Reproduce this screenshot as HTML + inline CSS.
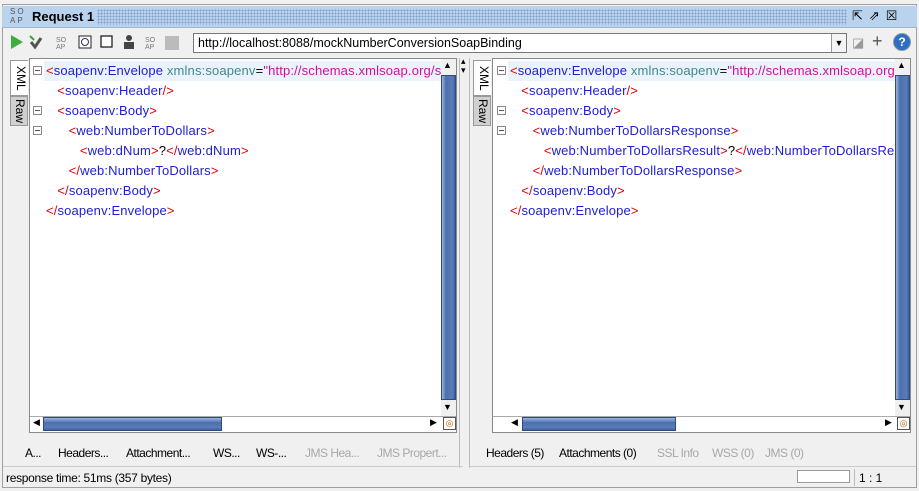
<!DOCTYPE html>
<html><head><style>
*{margin:0;padding:0;box-sizing:border-box}
body{width:919px;height:491px;background:#f0f0f0;font-family:"Liberation Sans",sans-serif;font-size:12px;position:relative;overflow:hidden;color:#000}
.a{position:absolute}
.title{left:2px;top:6px;width:915px;height:22px;background:#b9d3ef;border-bottom:1px solid #9bb7d6}
.dots{left:95px;top:3px;width:750px;height:16px;background-image:radial-gradient(#7f9fc7 0.8px,transparent 1px);background-size:3px 3px}
.ed{background:#fff;border:1px solid #8a8a8a}
.code{font-size:13px;line-height:20px;white-space:pre;font-family:"Liberation Sans",sans-serif;letter-spacing:0.15px}
.r{color:#e00000}.b{color:#2020d0}.t{color:#3f8a8a}.m{color:#d0109d}
.vs{background:linear-gradient(90deg,#9ab4dc,#4c6fae 30%,#5a7dba 80%,#3d5e99);border:1px solid #2e4c80}
.hs{background:linear-gradient(#9ab4dc,#4c6fae 40%,#5a7dba 80%,#3d5e99);border:1px solid #2e4c80}
.fold{width:9px;height:9px;border:1px solid #888;background:#fff}
.fold:after{content:"";position:absolute;left:1px;top:3px;width:5px;height:1px;background:#555}
.tab{background:#e8e8e8;border:1px solid #999;font-size:12px;writing-mode:vertical-rl;text-align:center}
.bt{font-size:12px;letter-spacing:-0.5px;top:446px}
.g{color:#a8a8a8}
</style></head><body>
<div class="a" style="left:2px;top:4px;width:915px;height:484px;border:1px solid #a0a0a0;background:#f0f0f0"></div>
<div class="a title">
 <div class="a" style="left:8px;top:1px;font-size:8px;line-height:9px;color:#555;letter-spacing:2px">SO<br>AP</div>
 <div class="a" style="left:30px;top:3px;font-weight:bold;font-size:13px">Request 1</div>
 <div class="a dots"></div>
 <div class="a" style="left:850px;top:2px;font-size:13px;letter-spacing:6px">⇱⇗☒</div>
</div>
<svg class="a" style="left:10px;top:34px" width="180" height="18">
<polygon points="1,1 13,8 1,15" fill="#3cae3c"/>
<path d="M21 8l4 5 6-9" stroke="#555" stroke-width="3" fill="none"/><path d="M20 2l4 4" stroke="#3a3" stroke-width="2"/>
<text x="46" y="8" font-size="7" fill="#777">SO</text><text x="46" y="15" font-size="7" fill="#777">AP</text>
<rect x="69" y="2" width="12" height="12" fill="#fff" stroke="#222"/><circle cx="75" cy="8" r="3.5" fill="none" stroke="#336"/>
<rect x="91" y="2" width="11" height="11" fill="#fff" stroke="#222" stroke-width="1.3"/>
<circle cx="119" cy="4" r="3" fill="#444"/><rect x="114" y="8" width="10" height="7" fill="#444"/>
<text x="135" y="8" font-size="7" fill="#777">SO</text><text x="135" y="15" font-size="7" fill="#777">AP</text>
<rect x="155" y="2" width="14" height="14" fill="#bbb"/>
</svg>
<div class="a" style="left:193px;top:33px;width:654px;height:20px;background:#fff;border:1px solid #777;font-size:12.5px;padding:2px 4px">http://localhost:8088/mockNumberConversionSoapBinding</div>
<div class="a" style="left:831px;top:34px;width:15px;height:18px;border-left:1px solid #999;background:#f4f4f4;font-size:9px;text-align:center;line-height:18px">▼</div>
<div class="a" style="left:852px;top:35px;color:#999;font-size:13px">◪</div>
<div class="a" style="left:872px;top:31px;font-size:18px;color:#555">+</div>
<div class="a" style="left:893px;top:33px;width:18px;height:18px;border-radius:50%;background:#2f6fc2;border:1px solid #89a;color:#fff;font-weight:bold;text-align:center;line-height:17px">?</div>
<div class="a" style="left:459px;top:58px;width:1px;height:410px;background:#bbb"></div>
<div class="a" style="left:469px;top:58px;width:1px;height:410px;background:#bbb"></div>
<div class="a" style="left:461px;top:57px;font-size:9px;line-height:9px">▴<br>▾</div>
<div class="a tab" style="left:10px;top:60px;width:18px;height:36px;background:#fff;border-right:none">XML</div>
<div class="a tab" style="left:10px;top:96px;width:18px;height:30px;background:#d0d0d0">Raw</div>
<div class="a ed" style="left:29px;top:58px;width:428px;height:375px"></div>
<div class="a" style="left:44px;top:61px;width:397px;height:20px;background:#eaf2fc"></div>
<div class="a fold" style="left:33px;top:66px"></div><div class="a fold" style="left:33px;top:106px"></div><div class="a fold" style="left:33px;top:126px"></div>
<div class="a code" style="left:46px;top:61px;width:395px;overflow:hidden"><span class="r">&lt;</span><span class="b">soapenv:Envelope</span> <span class="t">xmlns:soapenv</span>=<span class="m">"http://schemas.xmlsoap.org/soap/envelope/"</span>
   <span class="r">&lt;</span><span class="b">soapenv:Header</span><span class="r">/&gt;</span>
   <span class="r">&lt;</span><span class="b">soapenv:Body</span><span class="r">&gt;</span>
      <span class="r">&lt;</span><span class="b">web:NumberToDollars</span><span class="r">&gt;</span>
         <span class="r">&lt;</span><span class="b">web:dNum</span><span class="r">&gt;</span>?<span class="r">&lt;/</span><span class="b">web:dNum</span><span class="r">&gt;</span>
      <span class="r">&lt;/</span><span class="b">web:NumberToDollars</span><span class="r">&gt;</span>
   <span class="r">&lt;/</span><span class="b">soapenv:Body</span><span class="r">&gt;</span>
<span class="r">&lt;/</span><span class="b">soapenv:Envelope</span><span class="r">&gt;</span></div>
<div class="a" style="left:441px;top:59px;width:15px;height:357px;background:#f0f0f0"></div>
<div class="a" style="left:443px;top:60px;font-size:9px">▲</div>
<div class="a vs" style="left:441px;top:75px;width:15px;height:325px"></div>
<div class="a" style="left:443px;top:402px;font-size:9px">▼</div>
<div class="a" style="left:30px;top:416px;width:426px;height:16px;background:#fff;border-top:1px solid #aaa"></div>
<div class="a" style="left:33px;top:417px;font-size:9px">◀</div>
<div class="a hs" style="left:43px;top:417px;width:179px;height:14px"></div>
<div class="a" style="left:430px;top:417px;font-size:9px">▶</div>
<div class="a" style="left:443px;top:417px;width:13px;height:13px;border:1px solid #555;font-size:9px;line-height:11px;text-align:center;color:#a60">◎</div>
<div class="a bt" style="left:25px">A...</div>
<div class="a bt" style="left:58px">Headers...</div>
<div class="a bt" style="left:126px">Attachment...</div>
<div class="a bt" style="left:213px">WS...</div>
<div class="a bt" style="left:256px">WS-...</div>
<div class="a bt g" style="left:305px">JMS Hea...</div>
<div class="a bt g" style="left:377px">JMS Propert...</div>
<div class="a tab" style="left:473px;top:60px;width:18px;height:36px;background:#fff;border-right:none">XML</div>
<div class="a tab" style="left:473px;top:96px;width:18px;height:30px;background:#d0d0d0">Raw</div>
<div class="a ed" style="left:492px;top:58px;width:419px;height:375px"></div>
<div class="a" style="left:508px;top:61px;width:387px;height:20px;background:#eaf2fc"></div>
<div class="a fold" style="left:497px;top:66px"></div><div class="a fold" style="left:497px;top:106px"></div><div class="a fold" style="left:497px;top:126px"></div>
<div class="a code" style="left:510px;top:61px;width:385px;overflow:hidden"><span class="r">&lt;</span><span class="b">soapenv:Envelope</span> <span class="t">xmlns:soapenv</span>=<span class="m">"http://schemas.xmlsoap.org/soap/envelope/"</span>
   <span class="r">&lt;</span><span class="b">soapenv:Header</span><span class="r">/&gt;</span>
   <span class="r">&lt;</span><span class="b">soapenv:Body</span><span class="r">&gt;</span>
      <span class="r">&lt;</span><span class="b">web:NumberToDollarsResponse</span><span class="r">&gt;</span>
         <span class="r">&lt;</span><span class="b">web:NumberToDollarsResult</span><span class="r">&gt;</span>?<span class="r">&lt;/</span><span class="b">web:NumberToDollarsResult</span><span class="r">&gt;</span>
      <span class="r">&lt;/</span><span class="b">web:NumberToDollarsResponse</span><span class="r">&gt;</span>
   <span class="r">&lt;/</span><span class="b">soapenv:Body</span><span class="r">&gt;</span>
<span class="r">&lt;/</span><span class="b">soapenv:Envelope</span><span class="r">&gt;</span></div>
<div class="a" style="left:895px;top:59px;width:15px;height:357px;background:#f0f0f0"></div>
<div class="a" style="left:897px;top:60px;font-size:9px">▲</div>
<div class="a vs" style="left:895px;top:75px;width:15px;height:325px"></div>
<div class="a" style="left:897px;top:402px;font-size:9px">▼</div>
<div class="a" style="left:493px;top:416px;width:417px;height:16px;background:#fff;border-top:1px solid #aaa"></div>
<div class="a" style="left:511px;top:417px;font-size:9px">◀</div>
<div class="a hs" style="left:522px;top:417px;width:154px;height:14px"></div>
<div class="a" style="left:885px;top:417px;font-size:9px">▶</div>
<div class="a" style="left:897px;top:417px;width:13px;height:13px;border:1px solid #555;font-size:9px;line-height:11px;text-align:center;color:#a60">◎</div>
<div class="a bt" style="left:486px">Headers (5)</div>
<div class="a bt" style="left:559px">Attachments (0)</div>
<div class="a bt g" style="left:657px">SSL Info</div>
<div class="a bt g" style="left:712px">WSS (0)</div>
<div class="a bt g" style="left:765px">JMS (0)</div>
<div class="a" style="left:3px;top:466px;width:460px;height:1px;background:#ccc"></div>
<div class="a" style="left:470px;top:466px;width:446px;height:1px;background:#ccc"></div>
<div class="a" style="left:6px;top:471px;font-size:12px;letter-spacing:-0.3px">response time: 51ms (357 bytes)</div>
<div class="a" style="left:797px;top:470px;width:53px;height:13px;border:1px solid #999;background:#fff"></div>
<div class="a" style="left:854px;top:469px;width:1px;height:17px;background:#bbb"></div>
<div class="a" style="left:859px;top:471px;font-size:12px">1 : 1</div>
</body></html>
